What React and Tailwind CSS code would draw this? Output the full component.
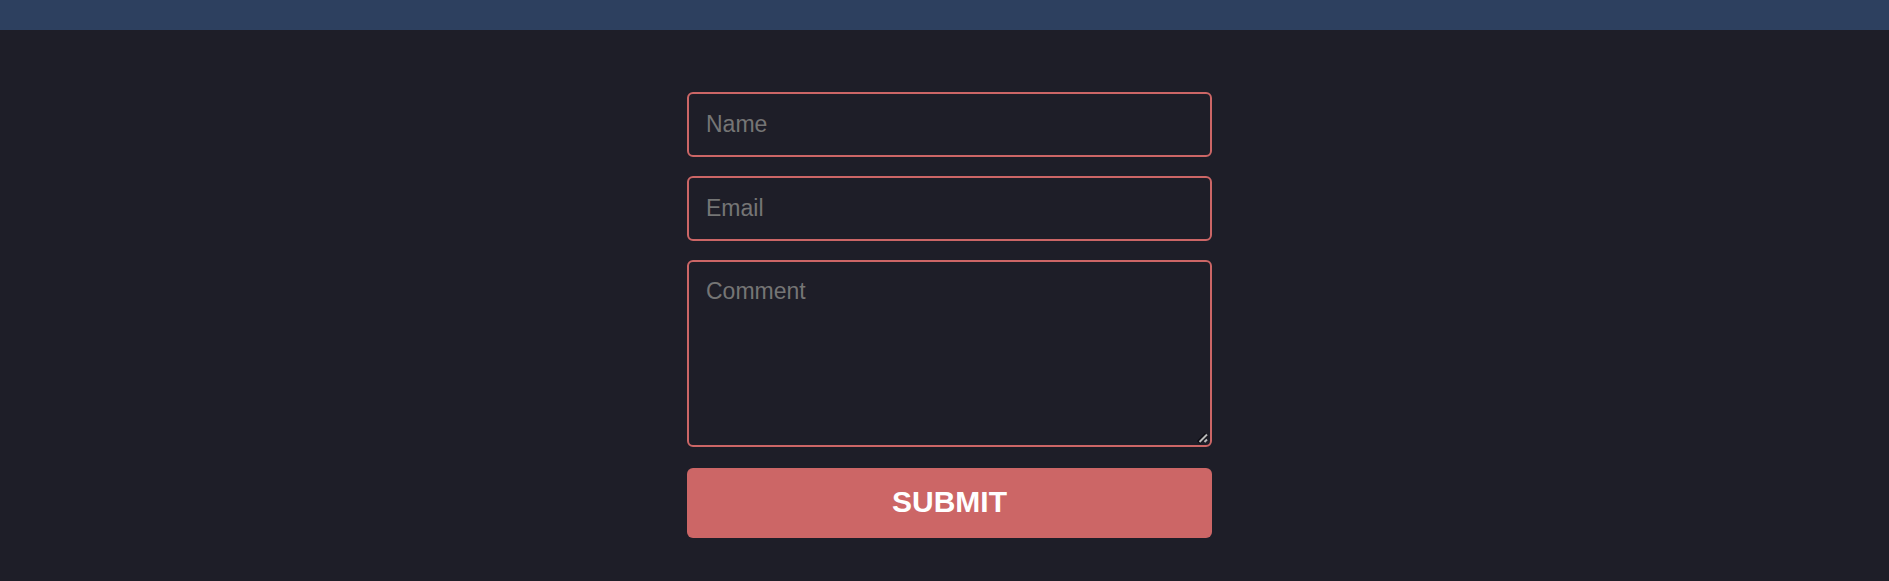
const field =
  "block w-full rounded-md border-2 border-[#cc6666] bg-transparent px-[17px] text-[23px] text-white placeholder:text-[#757575] outline-none focus:border-[#e08080]";

function ResizeGrip() {
  return (
    <svg
      className="pointer-events-none absolute right-[3px] bottom-[3px] size-3"
      viewBox="0 0 12 12"
      aria-hidden="true"
    >
      <path d="M1.5 10.5 9.5 2.5" stroke="#0b0b12" strokeWidth="4" />
      <path d="M2.5 10 10 2.5M7.5 10 10 7.5" stroke="#b8b8b8" strokeWidth="2" />
    </svg>
  );
}

export default function App() {
  return (
    <div className="min-h-screen bg-[#1e1e28] font-['Liberation_Sans',Arial,sans-serif]">
      <header className="h-[30px] bg-[#2d405f]" />
      <main className="flex justify-center pt-[62px] pl-[10px] pb-11">
        <form className="flex w-full max-w-[525px] flex-col gap-[19px]" onSubmit={(e) => e.preventDefault()}>
          <input type="text" name="name" aria-label="Name" placeholder="Name" className={`${field} h-[65px]`} />
          <input type="email" name="email" aria-label="Email" placeholder="Email" className={`${field} h-[65px]`} />
          <div className="relative mb-0.5">
            <textarea
              name="comment"
              aria-label="Comment"
              placeholder="Comment"
              className={`${field} h-[187px] resize-y py-4 leading-[26px] [&::-webkit-resizer]:bg-transparent`}
            />
            <ResizeGrip />
          </div>
          <button type="submit" className="h-[70px] w-full rounded-md bg-[#cc6666] pb-1 text-[30px] font-bold text-white">
            SUBMIT
          </button>
        </form>
      </main>
    </div>
  );
}
